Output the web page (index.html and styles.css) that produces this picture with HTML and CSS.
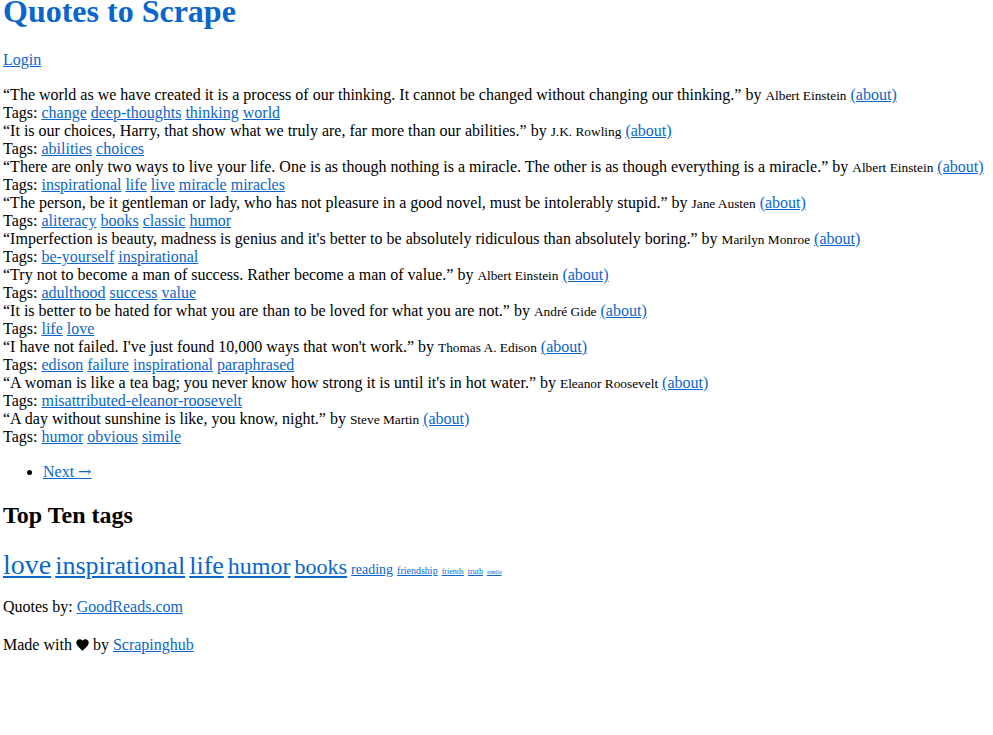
FILE: index.html
```html
<!DOCTYPE html>
<html lang="en">
<head>
<meta charset="UTF-8">
<title>Quotes to Scrape</title>
<link rel="stylesheet" href="styles.css">
</head>
<body>
<div class="container">
  <div class="header-box">
    <h1 class="site-title"><a href="#">Quotes to Scrape</a></h1>
    <p class="login"><a href="#">Login</a></p>
  </div>

  <div class="quotes">
    <div class="quote">
      <span class="text">“The world as we have created it is a process of our thinking. It cannot be changed without changing our thinking.”</span>
      <span>by <small class="author">Albert Einstein</small> <a href="#">(about)</a></span>
      <div class="tags">Tags: <a href="#">change</a> <a href="#">deep-thoughts</a> <a href="#">thinking</a> <a href="#">world</a></div>
    </div>
    <div class="quote">
      <span class="text">“It is our choices, Harry, that show what we truly are, far more than our abilities.”</span>
      <span>by <small class="author">J.K. Rowling</small> <a href="#">(about)</a></span>
      <div class="tags">Tags: <a href="#">abilities</a> <a href="#">choices</a></div>
    </div>
    <div class="quote">
      <span class="text">“There are only two ways to live your life. One is as though nothing is a miracle. The other is as though everything is a miracle.”</span>
      <span>by <small class="author">Albert Einstein</small> <a href="#">(about)</a></span>
      <div class="tags">Tags: <a href="#">inspirational</a> <a href="#">life</a> <a href="#">live</a> <a href="#">miracle</a> <a href="#">miracles</a></div>
    </div>
    <div class="quote">
      <span class="text">“The person, be it gentleman or lady, who has not pleasure in a good novel, must be intolerably stupid.”</span>
      <span>by <small class="author">Jane Austen</small> <a href="#">(about)</a></span>
      <div class="tags">Tags: <a href="#">aliteracy</a> <a href="#">books</a> <a href="#">classic</a> <a href="#">humor</a></div>
    </div>
    <div class="quote">
      <span class="text">“Imperfection is beauty, madness is genius and it's better to be absolutely ridiculous than absolutely boring.”</span>
      <span>by <small class="author">Marilyn Monroe</small> <a href="#">(about)</a></span>
      <div class="tags">Tags: <a href="#">be-yourself</a> <a href="#">inspirational</a></div>
    </div>
    <div class="quote">
      <span class="text">“Try not to become a man of success. Rather become a man of value.”</span>
      <span>by <small class="author">Albert Einstein</small> <a href="#">(about)</a></span>
      <div class="tags">Tags: <a href="#">adulthood</a> <a href="#">success</a> <a href="#">value</a></div>
    </div>
    <div class="quote">
      <span class="text">“It is better to be hated for what you are than to be loved for what you are not.”</span>
      <span>by <small class="author">André Gide</small> <a href="#">(about)</a></span>
      <div class="tags">Tags: <a href="#">life</a> <a href="#">love</a></div>
    </div>
    <div class="quote">
      <span class="text">“I have not failed. I've just found 10,000 ways that won't work.”</span>
      <span>by <small class="author">Thomas A. Edison</small> <a href="#">(about)</a></span>
      <div class="tags">Tags: <a href="#">edison</a> <a href="#">failure</a> <a href="#">inspirational</a> <a href="#">paraphrased</a></div>
    </div>
    <div class="quote">
      <span class="text">“A woman is like a tea bag; you never know how strong it is until it's in hot water.”</span>
      <span>by <small class="author">Eleanor Roosevelt</small> <a href="#">(about)</a></span>
      <div class="tags">Tags: <a href="#">misattributed-eleanor-roosevelt</a></div>
    </div>
    <div class="quote">
      <span class="text">“A day without sunshine is like, you know, night.”</span>
      <span>by <small class="author">Steve Martin</small> <a href="#">(about)</a></span>
      <div class="tags">Tags: <a href="#">humor</a> <a href="#">obvious</a> <a href="#">simile</a></div>
    </div>
  </div>

  <ul class="pager">
    <li class="next"><a href="#">Next <span class="arrow" aria-hidden="true">→</span></a></li>
  </ul>

  <div class="tags-box">
    <h2 class="tags-title">Top Ten tags</h2>
    <div class="tag-cloud">
      <span class="tag-item"><a class="tag t28" href="#">love</a></span>
      <span class="tag-item"><a class="tag t26" href="#">inspirational</a></span>
      <span class="tag-item"><a class="tag t26" href="#">life</a></span>
      <span class="tag-item"><a class="tag t24" href="#">humor</a></span>
      <span class="tag-item"><a class="tag t22" href="#">books</a></span>
      <span class="tag-item"><a class="tag t14" href="#">reading</a></span>
      <span class="tag-item"><a class="tag t10" href="#">friendship</a></span>
      <span class="tag-item"><a class="tag t8" href="#">friends</a></span>
      <span class="tag-item"><a class="tag t8" href="#">truth</a></span>
      <span class="tag-item"><a class="tag t6" href="#">simile</a></span>
    </div>
  </div>

  <footer class="footer">
    <p class="text-muted">Quotes by: <a href="#">GoodReads.com</a></p>
    <p class="copyright">Made with <svg class="heart" viewBox="0 0 24 22" width="13" height="12" aria-hidden="true"><path d="M12 21.5 L10.3 20 C4.2 14.5 0.5 11.1 0.5 6.6 C0.5 3 3.3 0.5 6.7 0.5 C8.8 0.5 10.8 1.5 12 3.1 C13.2 1.5 15.2 0.5 17.3 0.5 C20.7 0.5 23.5 3 23.5 6.6 C23.5 11.1 19.8 14.5 13.7 20 Z" fill="#000"/></svg> by <a href="#">Scrapinghub</a></p>
  </footer>
</div>
</body>
</html>
```

FILE: styles.css
```css
html, body {
  margin: 0;
  padding: 0;
  background: #ffffff;
}

body {
  font-family: "Liberation Serif", "Times New Roman", serif;
  font-size: 16px;
  color: #000000;
}

a {
  color: #0a66cc;
  text-decoration: underline;
}

.container {
  padding: 0 3px;
}

.site-title {
  margin: 0;
  font-size: 32px;
  line-height: 23px;
  font-weight: bold;
}

.site-title a {
  text-decoration: none;
}

.login {
  margin: 28px 0 17px;
  line-height: 18px;
}

.quote {
  line-height: 18px;
}

.author {
  font-size: 13.33px;
  line-height: 1;
}

.tags {
  line-height: 18px;
}

.pager {
  margin: 17px 0 16px;
  padding-left: 40px;
  line-height: 18px;
}

.arrow {
  font-family: "DejaVu Serif", serif;
  font-size: 16px;
  line-height: 1;
}

.tags-title {
  margin: 20px 0;
  font-size: 24px;
  line-height: 28px;
  font-weight: bold;
}

.tag-cloud {
  margin: 0;
}

.t28 { font-size: 28px; }
.t26 { font-size: 26px; }
.t24 { font-size: 24px; }
.t22 { font-size: 22px; }
.t14 { font-size: 14px; }
.t10 { font-size: 10px; }
.t8 { font-size: 8px; }
.t6 { font-size: 6px; }

.footer p {
  line-height: 18px;
}

.text-muted {
  margin: 17px 0 0;
}

.copyright {
  margin: 20px 0 16px;
}

.heart {
  vertical-align: -1px;
}
```
